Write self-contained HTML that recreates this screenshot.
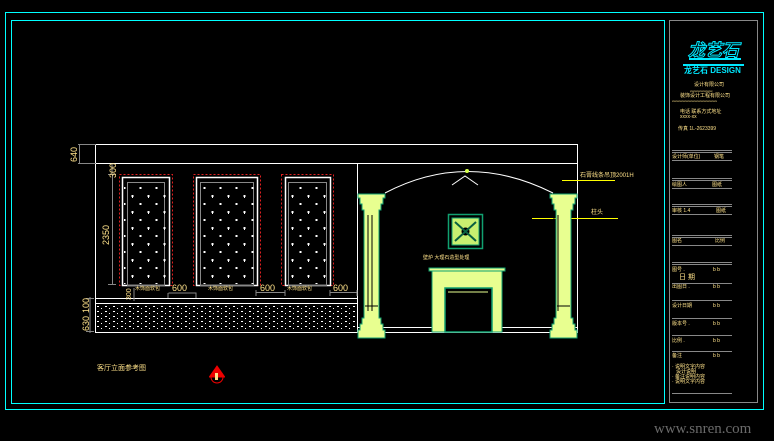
<!DOCTYPE html>
<html><head><meta charset="utf-8"><style>
html,body{margin:0;padding:0;background:#000;width:774px;height:441px;overflow:hidden}
svg{display:block}
text{font-family:"Liberation Sans","Noto Sans CJK SC",sans-serif}
</style></head><body>
<svg width="774" height="441" viewBox="0 0 774 441" xmlns="http://www.w3.org/2000/svg">
<defs>
<pattern id="dots" x="0" y="0" width="8" height="5" patternUnits="userSpaceOnUse">
<rect x="1" y="1" width="2" height="1" fill="#fff"/><rect x="5" y="3" width="1" height="1" fill="#fff"/>
</pattern>
<pattern id="tuft" x="0" y="0" width="16" height="16" patternUnits="userSpaceOnUse">
<path d="M3 4h3M4.5 3v3" stroke="#fff" stroke-width="1"/><path d="M11 12h3M12.5 11v2" stroke="#fff" stroke-width="1"/>
</pattern>
</defs>
<rect x="5.5" y="12.5" width="758" height="397" fill="none" stroke="#00ffff" stroke-width="1"/>
<rect x="11.5" y="20.5" width="653" height="383" fill="none" stroke="#00ffff" stroke-width="1"/>
<rect x="669.5" y="20.5" width="88" height="382" fill="none" stroke="#888" stroke-width="1"/>
<g stroke="#fff" fill="none" stroke-width="1">
<rect x="95.5" y="144.5" width="482" height="188"/>
<line x1="95" y1="163.5" x2="578" y2="163.5"/>
<line x1="357.5" y1="163" x2="357.5" y2="332"/>
<line x1="95" y1="298.5" x2="357" y2="298.5"/>
<line x1="95" y1="303.5" x2="357" y2="303.5"/>
<line x1="357" y1="327.5" x2="578" y2="327.5"/>
</g>
<rect x="97" y="305" width="259" height="26" fill="url(#dots)"/>
<g fill="none">
<rect x="119.5" y="174.5" width="53" height="111" stroke="#e02020" stroke-dasharray="2,2"/>
<rect x="193.5" y="174.5" width="67" height="111" stroke="#e02020" stroke-dasharray="2,2"/>
<rect x="281.5" y="174.5" width="52" height="111" stroke="#e02020" stroke-dasharray="2,2"/>
<rect x="122.5" y="177.5" width="47" height="108" stroke="#fff" stroke-width="1.5"/>
<rect x="196.5" y="177.5" width="61" height="108" stroke="#fff" stroke-width="1.5"/>
<rect x="285.5" y="177.5" width="45" height="108" stroke="#fff" stroke-width="1.5"/>
<rect x="127.5" y="182.5" width="37" height="103" stroke="#888"/>
<rect x="200.5" y="182.5" width="53" height="103" stroke="#888"/>
<rect x="288.5" y="182.5" width="38" height="103" stroke="#888"/>
</g>
<rect x="124" y="183" width="44" height="101" fill="url(#tuft)"/>
<rect x="198" y="183" width="58" height="101" fill="url(#tuft)"/>
<rect x="287" y="183" width="42" height="101" fill="url(#tuft)"/>
<g stroke="#888" fill="none">
<path d="M78 144.5h18M78 163.5h18M79.5 144v20"/>
<path d="M112 164v10M112.5 174v111M108 174.5h8M108 284.5h8"/>
<path d="M90 297v36M86 298.5h8M86 331.5h8M134 288v13"/>
<path d="M168 293v5M196 293v5M168.5 293h28M256 290v6M285 290v6M256 292.5h29M330 290v6M357 290v6M330 292.5h27"/>
</g>
<g fill="#ffe28a" font-size="9">
<text transform="translate(77,162) rotate(-90)">640</text>
<text transform="translate(116,178) rotate(-90)">300</text>
<text transform="translate(109,245) rotate(-90)">2350</text>
<text transform="translate(89,331) rotate(-90)">630</text>
<text transform="translate(89,313) rotate(-90)">100</text>
<text transform="translate(131,300) rotate(-90)" font-size="7">300</text>
<text x="172" y="291">600</text><text x="260" y="291">600</text><text x="333" y="291">600</text>
<text x="135" y="290" font-size="5">木饰面软包</text><text x="208" y="290" font-size="5">木饰面软包</text><text x="287" y="290" font-size="5">木饰面软包</text>
<text x="97" y="370" font-size="7">客厅立面参考图</text>
<text x="580" y="177" font-size="6">石膏线条吊顶2001H</text>
<text x="591" y="214" font-size="6">柱头</text>
<text x="423" y="259" font-size="5">壁炉 大理石造型处理</text>
</g>
<g stroke="#ffff00"><line x1="562" y1="180.5" x2="615" y2="180.5"/><line x1="532" y1="218.5" x2="618" y2="218.5"/></g>
<path d="M385 193 Q467 150 553 193" stroke="#fff" fill="none"/>
<path d="M452 185l13-9 13 9" stroke="#fff" fill="none"/>
<circle cx="467" cy="171" r="2" fill="#d4ff4a"/>
<g fill="#e8ff90" stroke="#11a070">
<path d="M358 194h27v4h-2v6h-2v6h-2v108h2v6h2v6h2v8h-27v-8h2v-6h2v-6h2v-108h-2v-6h-2v-6h-2z"/>
<path d="M550 194h27v4h-2v6h-2v6h-2v108h2v6h2v6h2v8h-27v-8h2v-6h2v-6h2v-108h-2v-6h-2v-6h-2z"/>
</g>
<g stroke="#000"><path d="M368 215v96M372 215v96M554 215v96M558 215v96M365 306h13M557 306h13"/></g>
<rect x="448.5" y="214.5" width="34" height="34" fill="#000" stroke="#11a070" stroke-width="1.5"/>
<rect x="452" y="218" width="27" height="27" fill="#c8f070" stroke="#11a070"/>
<circle cx="465.5" cy="231.5" r="4" fill="#000"/>
<path d="M455 222l21 19M476 222l-21 19" stroke="#0a6040" stroke-width="2"/>
<g fill="#e8ff90" stroke="#11a070">
<rect x="429" y="268" width="76" height="3"/>
<rect x="432" y="271" width="70" height="61"/>
</g>
<rect x="445" y="288" width="47" height="44" fill="#000" stroke="#11a070" stroke-width="1.5"/>
<path d="M448 292h40" stroke="#e8ff90"/>
<circle cx="217" cy="377" r="6" fill="none" stroke="#e00"/>
<path d="M209 377h16M217 366l-7 10h14z" stroke="#e00" fill="#e00" stroke-width="1"/>
<rect x="215" y="373" width="3" height="7" fill="#ffe28a"/>
<g fill="#00e8ff">
<text x="688" y="56" font-size="17" font-weight="bold" font-style="italic" fill="none" stroke="#00e8ff" stroke-width="1">龙艺石</text>
<rect x="689" y="58" width="52" height="2"/>
<rect x="683" y="64" width="61" height="2"/>
<text x="684" y="73" font-size="8" font-weight="bold">龙艺石 DESIGN</text>
</g>
<g fill="#ffe28a" font-size="5">
<text x="694" y="86">设计有限公司</text>
<text x="690" y="92" font-size="3">xxxxxxxxxxxxxxx</text>
<text x="680" y="97">装饰设计工程有限公司</text>
<text x="672" y="102" font-size="3">xxxxxxxxxxxxxxxxxxxxxxxxxxxxxx</text>
<text x="680" y="113">电话 联系方式地址</text>
<text x="680" y="118">xxxx-xx</text>
<text x="678" y="130">传真 1L-2623399</text>
<text x="672" y="158">设计师(单位)</text><text x="714" y="158">钢笔</text>
<text x="672" y="186">绘图人</text><text x="712" y="186">图纸</text>
<text x="672" y="212">审核 1.4</text><text x="716" y="212">图纸</text>
<text x="672" y="242">图名</text><text x="715" y="242">比例</text>
<text x="672" y="271">图号 .</text><text x="713" y="271">b b</text>
<text x="679" y="279" font-size="7">日 期</text>
<text x="672" y="288">出图日 .</text><text x="713" y="288">b b</text>
<text x="672" y="307">设计日期</text><text x="713" y="307">b b</text>
<text x="672" y="325">版本号 .</text><text x="713" y="325">b b</text>
<text x="672" y="342">比例 .</text><text x="713" y="342">b b</text>
<text x="672" y="357">备注</text><text x="713" y="357">b b</text>
<text x="672" y="368">· 说明文字内容</text><text x="676" y="373">设计说明</text>
<text x="672" y="378">· 备注说明内容</text><text x="672" y="383">· 说明文字内容</text>
</g>
<g stroke="#888" fill="none">
<path d="M672 150.5h60M672 152.5h60M672 160.5h60"/>
<path d="M672 178.5h60M672 180.5h60M672 188.5h60"/>
<path d="M672 204.5h60M672 206.5h60M672 214.5h60"/>
<path d="M672 235.5h60M672 237.5h60M672 245.5h60"/>
<path d="M672 262.5h60M672 264.5h60M672 283.5h60M672 300.5h60M672 318.5h60M672 335.5h60M672 351.5h60"/>
<path d="M672 393.5h60"/>
</g>
<text x="654" y="433" style="font-family:'Liberation Serif',serif;font-size:15px" fill="#6a6a6a">www.snren.com</text>
</svg>
</body></html>
